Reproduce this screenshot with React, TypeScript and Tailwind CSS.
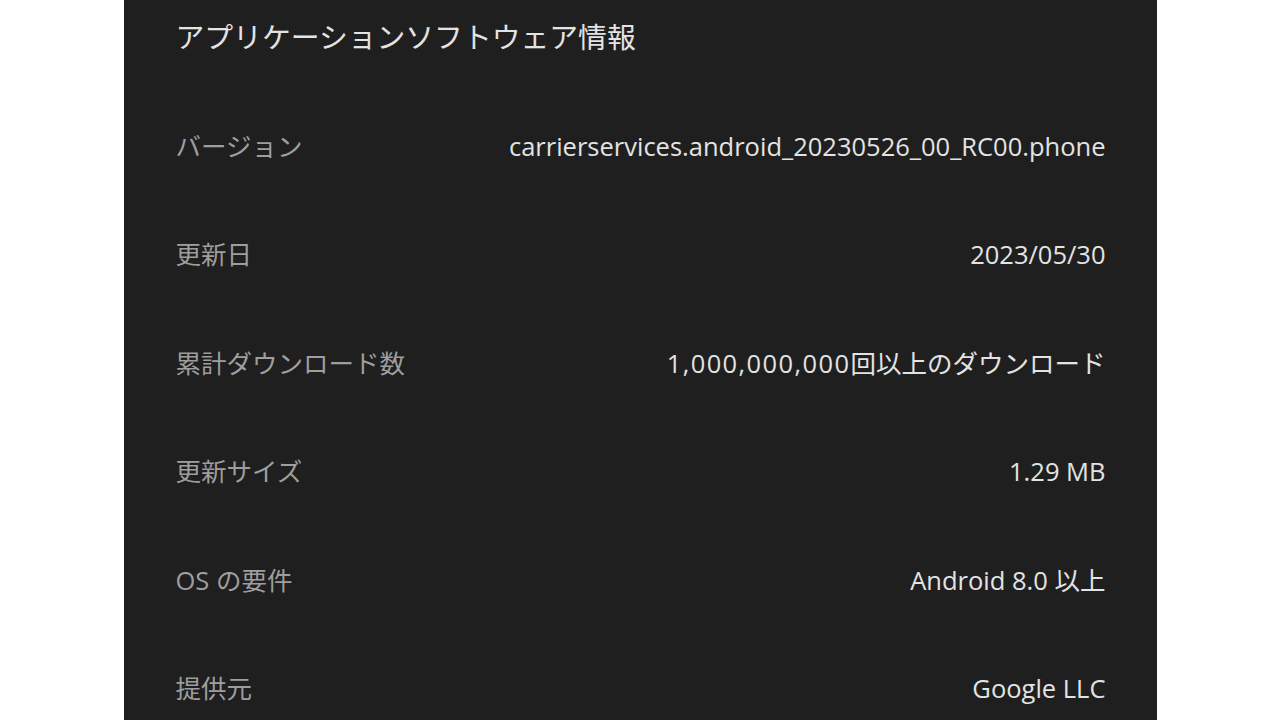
import type { ReactNode } from "react";

const rows: { label: string; value: ReactNode }[] = [
  { label: "バージョン", value: "carrierservices.android_20230526_00_RC00.phone" },
  { label: "更新日", value: "2023/05/30" },
  {
    label: "累計ダウンロード数",
    value: (
      <>
        <span className="tracking-[1.4px]">1,000,000,000</span>回以上のダウンロード
      </>
    ),
  },
  { label: "更新サイズ", value: "1.29 MB" },
  { label: "OS の要件", value: "Android 8.0 以上" },
  { label: "提供元", value: "Google LLC" },
];

export default function App() {
  return (
    <div
      className="w-[1280px] h-[720px] bg-white overflow-hidden"
      style={{ fontFamily: '"Open Sans", "Noto Sans CJK JP", sans-serif' }}
    >
      <div className="mx-auto w-[1033px] h-full bg-[#1f1f1f] pl-[52px] pr-[51px]">
        {/* タイトル */}
        <div className="h-[74px] flex items-center text-[28.8px] text-[#e3e3e3]">
          アプリケーションソフトウェア情報
        </div>
        <div className="pt-[18px]">
          {rows.map((r) => (
            <div key={r.label} className="h-[108.4px] flex items-center justify-between text-[25.5px]">
              <span className="text-[#9e9e9e]">{r.label}</span>
              <span className="text-[#e3e3e3]">{r.value}</span>
            </div>
          ))}
        </div>
      </div>
    </div>
  );
}
